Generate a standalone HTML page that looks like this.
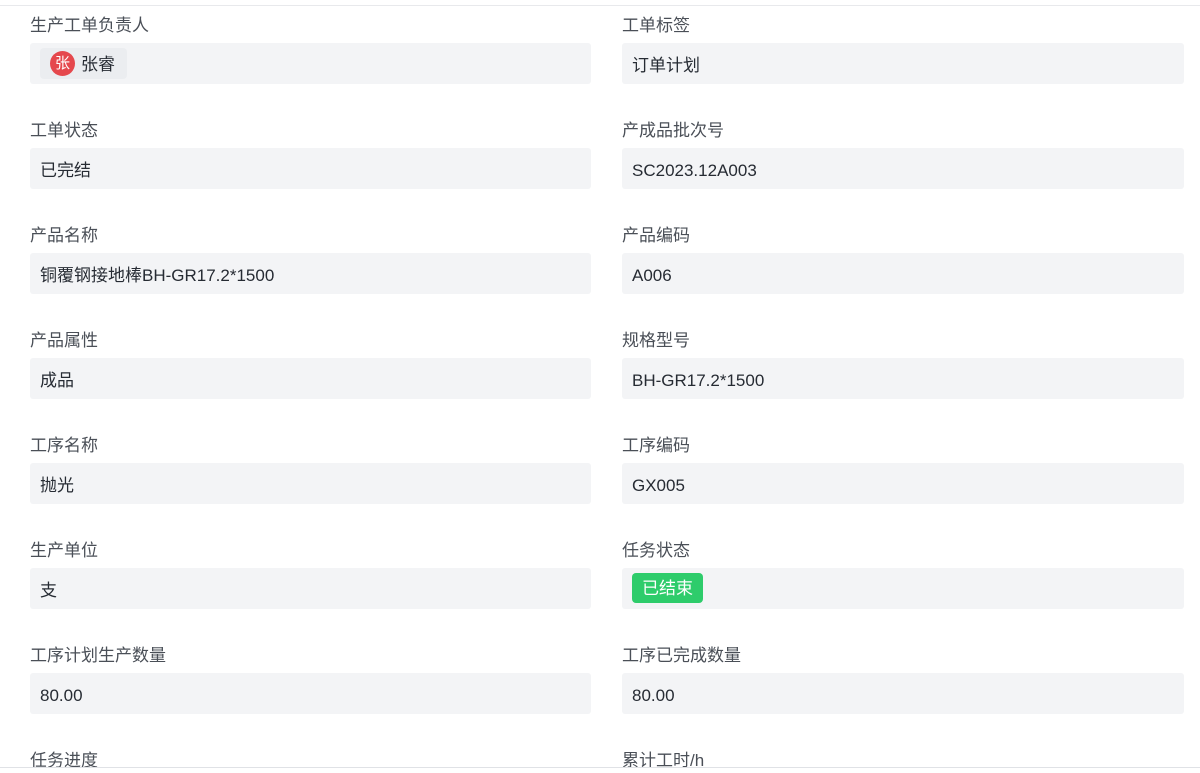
<!DOCTYPE html>
<html><head><meta charset="utf-8"><style>
*{margin:0;padding:0;box-sizing:border-box}
body{width:1200px;height:769px;overflow:hidden;background:#fff;font-family:"Liberation Sans","Noto Sans CJK SC",sans-serif;position:relative}
.top{position:absolute;left:0;right:0;top:5px;border-top:1px solid #e8e9ec}
.bot{position:absolute;left:0;right:0;top:767px;border-top:1px solid #e0e2e6}
.l{position:absolute;font-size:17px;color:#4a4f57;line-height:24px}
.b{position:absolute;height:41px;background:#f3f4f6;border-radius:3px;font-size:17px;color:#262b33;line-height:45px;padding-left:10px}
.c1{left:30px;width:561px}.c2{left:622px;width:562px}
.chip{display:inline-block;height:31px;line-height:33px;margin-top:5px;background:#ebedf0;border-radius:4px;padding:0 12px 0 10px;vertical-align:top}
.av{display:inline-block;width:25px;height:25px;border-radius:50%;background:#e5484d;color:#fff;font-size:15px;line-height:25px;text-align:center;margin-right:6px;vertical-align:middle;position:relative;top:-2px}
.tag{display:inline-block;background:#2ecc6b;color:#fff;border-radius:4px;height:30px;line-height:32px;padding:0 10px;margin-top:5px;vertical-align:top;font-size:17px}
</style></head><body>
<div class="top"></div>
<div class="l c1" style="top:14px;left:30px">生产工单负责人</div>
<div class="l" style="top:14px;left:622px">工单标签</div>
<div class="b c1" style="top:43px"><span class="chip"><span class="av">张</span>张睿</span></div>
<div class="b c2" style="top:43px">订单计划</div>

<div class="l" style="top:119px;left:30px">工单状态</div>
<div class="l" style="top:119px;left:622px">产成品批次号</div>
<div class="b c1" style="top:148px">已完结</div>
<div class="b c2" style="top:148px">SC2023.12A003</div>

<div class="l" style="top:224px;left:30px">产品名称</div>
<div class="l" style="top:224px;left:622px">产品编码</div>
<div class="b c1" style="top:253px">铜覆钢接地棒BH-GR17.2*1500</div>
<div class="b c2" style="top:253px">A006</div>

<div class="l" style="top:329px;left:30px">产品属性</div>
<div class="l" style="top:329px;left:622px">规格型号</div>
<div class="b c1" style="top:358px">成品</div>
<div class="b c2" style="top:358px">BH-GR17.2*1500</div>

<div class="l" style="top:434px;left:30px">工序名称</div>
<div class="l" style="top:434px;left:622px">工序编码</div>
<div class="b c1" style="top:463px">抛光</div>
<div class="b c2" style="top:463px">GX005</div>

<div class="l" style="top:539px;left:30px">生产单位</div>
<div class="l" style="top:539px;left:622px">任务状态</div>
<div class="b c1" style="top:568px">支</div>
<div class="b c2" style="top:568px"><span class="tag">已结束</span></div>

<div class="l" style="top:644px;left:30px">工序计划生产数量</div>
<div class="l" style="top:644px;left:622px">工序已完成数量</div>
<div class="b c1" style="top:673px">80.00</div>
<div class="b c2" style="top:673px">80.00</div>

<div class="l" style="top:749px;left:30px">任务进度</div>
<div class="l" style="top:749px;left:622px">累计工时/h</div>
<div class="bot"></div>
</body></html>
